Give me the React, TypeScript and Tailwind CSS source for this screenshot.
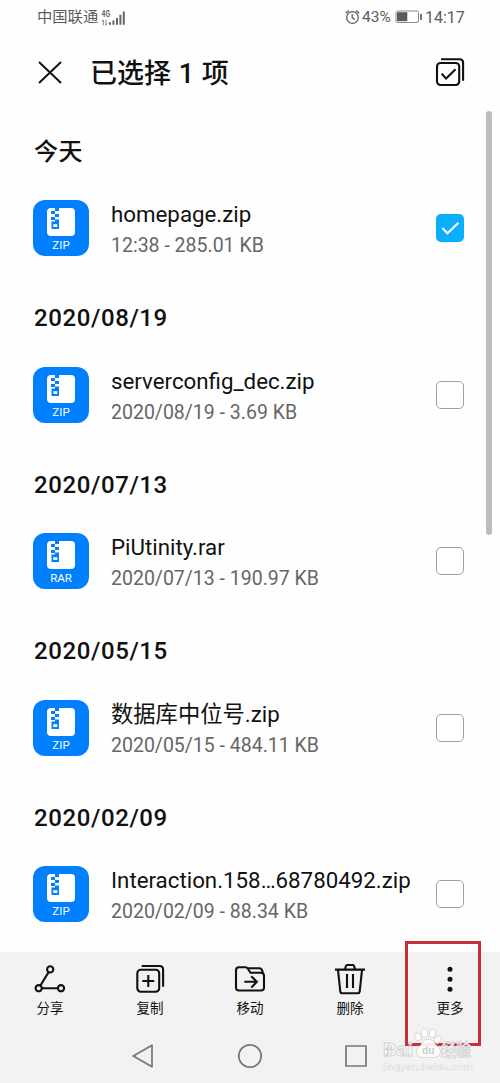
import React, { useState } from 'react';

interface FileItem {
  id: string;
  group: string;
  name: string;
  info: string;
  type: 'ZIP' | 'RAR';
}

const files: FileItem[] = [
  { id: '1', group: '今天', name: 'homepage.zip', info: '12:38 - 285.01 KB', type: 'ZIP' },
  { id: '2', group: '2020/08/19', name: 'serverconfig_dec.zip', info: '2020/08/19 - 3.69 KB', type: 'ZIP' },
  { id: '3', group: '2020/07/13', name: 'PiUtinity.rar', info: '2020/07/13 - 190.97 KB', type: 'RAR' },
  { id: '4', group: '2020/05/15', name: '数据库中位号.zip', info: '2020/05/15 - 484.11 KB', type: 'ZIP' },
  { id: '5', group: '2020/02/09', name: 'Interaction.158…68780492.zip', info: '2020/02/09 - 88.34 KB', type: 'ZIP' },
];

const StatusBar: React.FC = () => (
  <div className="flex h-[35px] shrink-0 items-center justify-between pl-[37px] pr-[36px] text-[15.5px] text-[#5c5c5c]">
    <div className="flex items-center">
      <span className="w-[62px] whitespace-nowrap text-[15.3px]">中国联通</span>
      <svg className="ml-[2px]" width="26" height="18" viewBox="0 0 26 18">
        <text x="0.5" y="7.5" fontSize="8.5" fontWeight="700" fill="#666" textLength="8.5" lengthAdjust="spacingAndGlyphs">4G</text>
        <path d="M1 12.5l1.3-1.6v5.4M5 11v5.2l1.4-1.6" fill="none" stroke="#777" strokeWidth="0.9" />
        <path d="M9 13.3v2.4M12.4 11.5v4.2M16 9v6.7M19.4 5.8v9.9M22.8 2.5v13.2" fill="none" stroke="#666" strokeWidth="2" />
      </svg>
    </div>
    <div className="flex items-center">
      <svg className="-mt-px" width="15" height="16" viewBox="0 0 15 16" fill="none" stroke="#5c5c5c" strokeWidth="1.3">
        <circle cx="7.5" cy="8.5" r="5.8" />
        <path d="M7.2 5.3v3.5l2.7 1.6M0.8 4.2l3-2.8M14.2 4.2l-3-2.8" />
      </svg>
      <span className="ml-[2px] w-[30px] whitespace-nowrap">43%</span>
      <svg className="ml-[3px] -mt-px" width="28" height="14" viewBox="0 0 28 14">
        <rect x="1" y="1" width="22.5" height="11.5" rx="1.5" fill="none" stroke="#8b8b8b" />
        <path d="M2 2.2h10.3v9H2z" fill="#5c5c5c" />
        <path d="M26 4v6" stroke="#777" strokeWidth="2" />
      </svg>
      <span className="ml-[2px] w-[39px] whitespace-nowrap text-[16px]">14:17</span>
    </div>
  </div>
);

const ArchiveIcon: React.FC<{ label: string }> = ({ label }) => (
  <div className="flex h-14 w-14 shrink-0 flex-col items-center rounded-xl bg-[#0080ff] pt-2">
    <svg width="28" height="28" viewBox="0 0 28 28">
      <rect width="28" height="28" rx="4" fill="#fff" />
      <path d="M8 0h4v3H8zM4 3h4v3H4zM8 6h4v3H8zM4 9h4v3H4zM8 11.5h4v2H8zM4.5 13.5H12v7.5H4.5z" fill="#0080ff" />
      <path d="M6.3 16.2h4V19h-4z" fill="#fff" />
    </svg>
    <span className="mt-[3px] text-[11.5px] leading-[12px] text-white">{label}</span>
  </div>
);

const Checkbox: React.FC<{ checked: boolean }> = ({ checked }) =>
  checked ? (
    <span className="mt-3.5 flex h-7 w-7 shrink-0 items-center justify-center rounded-[5px] bg-[#0aaefa]">
      <svg width="28" height="28" viewBox="0 0 28 28" fill="none" stroke="#fff" strokeWidth="2.1">
        <path d="M6.3 14l5.2 5.2L22.5 8.8" />
      </svg>
    </span>
  ) : (
    <span className="mt-3.5 h-7 w-7 shrink-0 rounded-[5px] border border-[#a0a0a0] bg-white" />
  );

const iconProps = {
  width: 32,
  height: 32,
  viewBox: '0 0 32 32',
  fill: 'none',
  stroke: '#111',
  strokeWidth: 2.1,
} as const;

const actions = [
  {
    label: '分享',
    icon: (
      <svg {...iconProps}>
        <circle cx="16.2" cy="6.4" r="3.1" />
        <circle cx="4.7" cy="25.2" r="3.1" />
        <circle cx="27" cy="25.2" r="3.1" />
        <path d="M14.6 9.1L6.4 22.5M7.9 25.2h16" />
      </svg>
    ),
  },
  {
    label: '复制',
    icon: (
      <svg {...iconProps}>
        <rect x="3.3" y="6.7" width="21.9" height="22" rx="3.5" />
        <path d="M7.7 3h17.8q3.6 0 3.6 3.6v17.1M14.3 12v12M8.3 18h12" />
      </svg>
    ),
  },
  {
    label: '移动',
    icon: (
      <svg {...iconProps}>
        <path d="M5 4.2h6.8q1.1 0 1.7 1l3 4.6H27q3 0 3 3v11.7q0 3-3 3H5q-3 0-3-3V7.2q0-3 3-3zM13.2 5.2H25q3.4 0 3.8 4.8M10.3 18.8h12.4M17.3 13.2l5.6 5.6-5.6 5.6" />
      </svg>
    ),
  },
  {
    label: '删除',
    icon: (
      <svg {...iconProps}>
        <path d="M1 6.6h30M11 6.4l.8-3.2q.3-1.2 1.5-1.2h5.4q1.2 0 1.5 1.2l.8 3.2M4 6.8l2.3 21.7q.3 1.8 2 1.8h15.4q1.7 0 2-1.8L28 6.8M13 11V25M19 11V25" />
      </svg>
    ),
  },
  {
    label: '更多',
    icon: (
      <svg {...iconProps} fill="#111" stroke="none">
        <circle cx="16" cy="6.2" r="2.5" />
        <circle cx="16" cy="16.2" r="2.5" />
        <circle cx="16" cy="26.2" r="2.5" />
      </svg>
    ),
  },
];

const Watermark: React.FC = () => (
  <svg className="absolute left-[380px] top-[1024px]" width="100" height="52" viewBox="0 0 100 52">
    <g fill="#fff" fillOpacity="0.9" stroke="#cfcfcf" strokeWidth="0.8">
      <ellipse cx="38" cy="13" rx="3.1" ry="4" transform="rotate(-20 38 13)" />
      <ellipse cx="44.5" cy="9" rx="3.1" ry="4.2" />
      <ellipse cx="52.5" cy="9.3" rx="3.1" ry="4.2" transform="rotate(10 52.5 9.3)" />
      <ellipse cx="58" cy="15.5" rx="3.1" ry="4" transform="rotate(25 58 15.5)" />
      <path d="M48 15q5 0 8 6 6 4 4 9-3 5-12 3-9 2-11-3-2-5 4-9 2-6 7-6z" />
      <text x="3" y="32" fontSize="19" fontWeight="700" textLength="30" lengthAdjust="spacingAndGlyphs">Bai</text>
      <text x="61" y="32" fontSize="17" fontWeight="700" textLength="30" lengthAdjust="spacingAndGlyphs">经验</text>
    </g>
    <text x="42" y="30" fontSize="11" fontWeight="700" fill="#d0d0d0">du</text>
    <text x="3" y="45.5" fontSize="9" fill="#fafafa" stroke="#dedede" strokeWidth="0.4" textLength="90" lengthAdjust="spacingAndGlyphs">jingyan.baidu.com</text>
  </svg>
);

export default function App() {
  const [selected, setSelected] = useState<string[]>(['1']);

  const toggle = (id: string) =>
    setSelected((s) => (s.includes(id) ? s.filter((x) => x !== id) : [...s, id]));

  return (
    <div className="relative flex h-[1083px] w-[500px] flex-col overflow-hidden bg-[#fefefe] font-[Roboto,'Noto_Sans_CJK_SC',sans-serif] text-[#111]">
      <StatusBar />

      {/* Header */}
      <header className="flex h-[76px] shrink-0 items-center pl-[38px] pr-[34px]">
        <svg width="24" height="24" viewBox="0 0 24 24" fill="none" stroke="#111" strokeWidth="2">
          <path d="M1 1l22 21M23 1l-22 21" />
        </svg>
        <h1 className="ml-[28px] mt-0.5 flex-1 whitespace-nowrap text-[27px] font-medium [word-spacing:1px]">已选择 1 项</h1>
        <svg width="32" height="32" viewBox="0 0 32 32" fill="none" stroke="#111" strokeWidth="2.1">
          <rect x="3" y="6" width="22.2" height="22" rx="3.5" />
          <path d="M7 2.2h18.5q3.6 0 3.6 3.6v17.9M7.7 16.8l4.4 4.8 9.4-9.3" />
        </svg>
      </header>

      {/* File list */}
      <main className="flex min-h-0 flex-1 overflow-hidden">
        <div className="w-[486px] shrink-0">
          {files.map((f) => (
            <section key={f.id} className="h-[166.6px]">
              <h2 className="flex h-[81px] items-center pl-[34px] text-[24px] font-medium tracking-[0.6px]">{f.group}</h2>
              <div className="flex items-start pl-[33px] pr-[22px] pt-2" onClick={() => toggle(f.id)}>
                <ArchiveIcon label={f.type} />
                <div className="ml-[22px] min-w-0 flex-1 whitespace-nowrap">
                  <p className="text-[22.3px] leading-[28px]">{f.name}</p>
                  <p className="mt-px text-[19.5px] leading-[33px] text-[#666]">{f.info}</p>
                </div>
                <Checkbox checked={selected.includes(f.id)} />
              </div>
            </section>
          ))}
        </div>
        <div className="h-[424px] w-[5.5px] rounded-full bg-[#bdbdbd]" />
      </main>

      {/* Actions and navigation keys */}
      <footer className="h-[131px] shrink-0 bg-[#f2f2f2]">
        <div className="grid h-[73px] grid-cols-5 pt-[11px]">
          {actions.map((a) => (
            <button key={a.label} className="flex flex-col items-center">
              {a.icon}
              <span className="mt-[3px] text-[13.5px] leading-[20px]">{a.label}</span>
            </button>
          ))}
        </div>
        <div className="flex h-[62px] items-center pl-[130px]">
          <svg width="240" height="26" viewBox="0 0 240 26" fill="none" stroke="#777" strokeWidth="1.7" strokeLinejoin="round">
            <path d="M3.3 13L22 2.2v21.6z" />
            <circle cx="120" cy="13" r="11.2" />
            <rect x="216" y="3" width="20" height="20" />
          </svg>
        </div>
      </footer>

      <div className="absolute left-[405px] top-[941px] h-[105px] w-[76px] border-3 border-[#c72f38]" />
      <Watermark />
    </div>
  );
}
